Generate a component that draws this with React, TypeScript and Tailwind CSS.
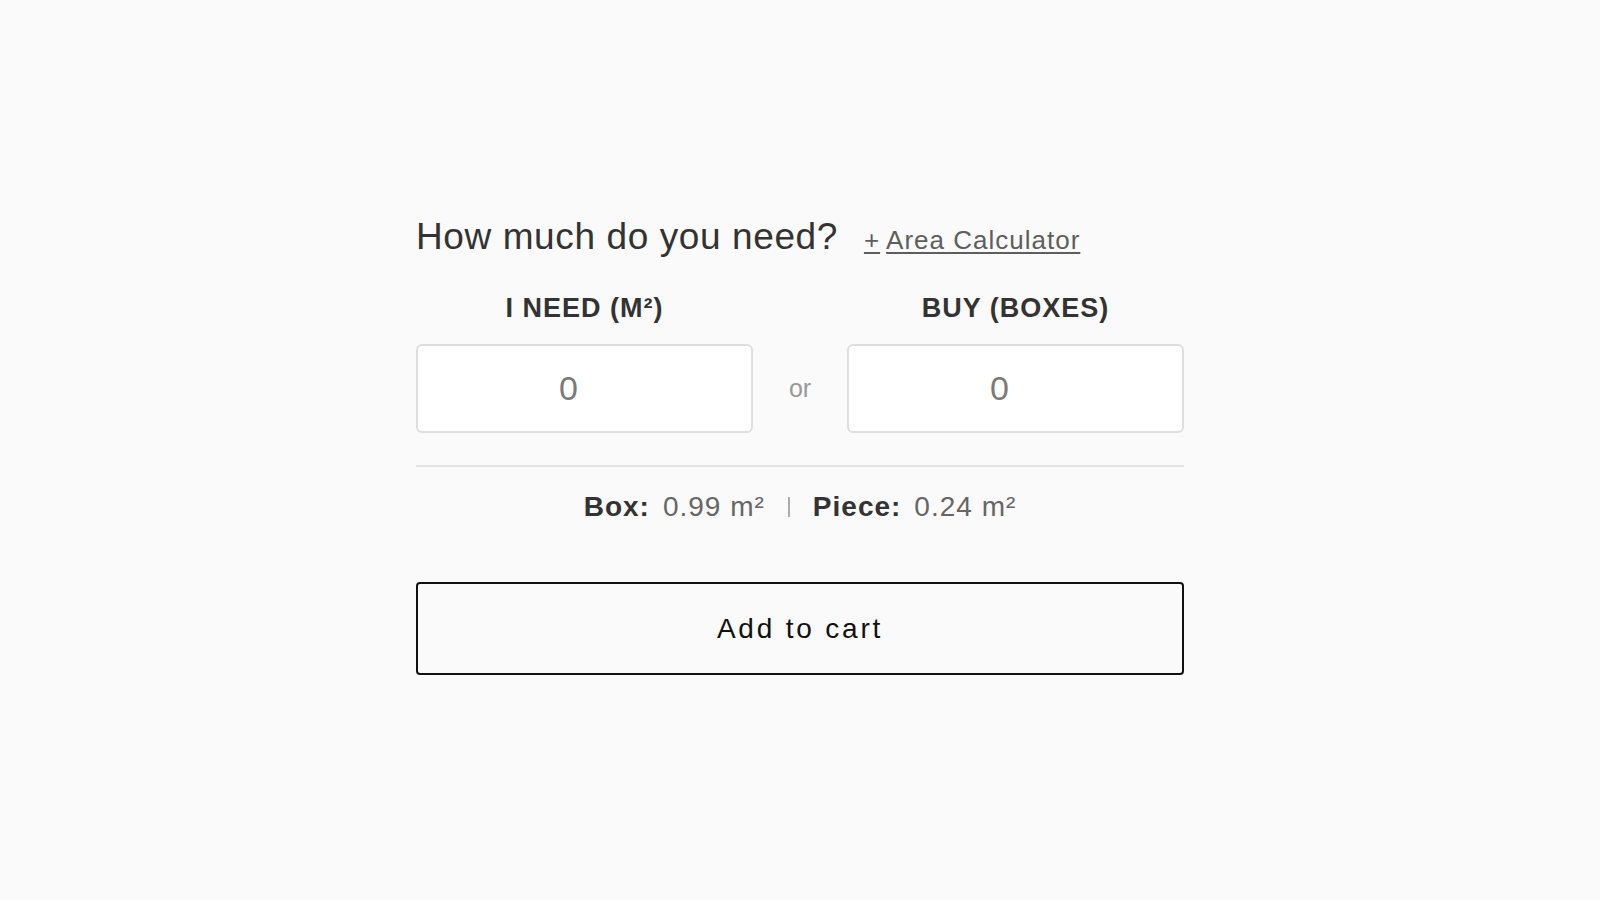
import React from "react";

export default function App() {
  return (
    <div
      className="min-h-screen w-full bg-[#fafafa]"
      style={{ fontFamily: '"Liberation Sans", Arial, Helvetica, sans-serif' }}
    >
      <div className="mx-auto w-[768px] pt-[218px]">
        <div className="flex items-baseline gap-[26px]">
          <h2 className="text-[37px] leading-none tracking-[0.6px] font-normal text-[#333]">
            How much do you need?
          </h2>
          <a
            href="#"
            className="flex items-baseline text-[26px] leading-none tracking-[1px] text-[#5e5e5e]"
          >
            <span className="underline decoration-[1.5px] underline-offset-[3px]">+</span>
            <span className="ml-[6px] underline decoration-[1.5px] underline-offset-[3px]">
              Area Calculator
            </span>
          </a>
        </div>

        <div className="mt-[40px] grid grid-cols-[337px_1fr_337px] gap-y-[22px]">
          <div className="text-center text-[27px] leading-none font-bold tracking-[1px] text-[#333]">
            I NEED (M²)
          </div>
          <div />
          <div className="text-center text-[27px] leading-none font-bold tracking-[1px] text-[#333]">
            BUY (BOXES)
          </div>

          <input
            type="text"
            placeholder="0"
            className="h-[89px] w-full rounded-[6px] border-2 border-[#dedede] bg-white pr-[32px] text-center text-[34px] text-[#777] outline-none placeholder:text-[#7a7a7a]"
          />
          <div className="flex items-center justify-center text-[25px] text-[#999]">or</div>
          <input
            type="text"
            placeholder="0"
            className="h-[89px] w-full rounded-[6px] border-2 border-[#dedede] bg-white pr-[32px] text-center text-[34px] text-[#777] outline-none placeholder:text-[#7a7a7a]"
          />
        </div>

        <div className="mt-[32px] h-[2px] w-full bg-[#e3e3e3]" />

        <div className="mt-[26px] flex items-center justify-center text-[28px] leading-none tracking-[1px]">
          <span className="font-bold text-[#333]">Box:</span>
          <span className="ml-[13px] text-[#666]">0.99 m²</span>
          <span className="mx-[23px] h-[20px] w-[2px] bg-[#ababab]" />
          <span className="font-bold text-[#333]">Piece:</span>
          <span className="ml-[13px] text-[#666]">0.24 m²</span>
        </div>

        <button
          type="button"
          className="mt-[61px] flex h-[93px] w-full items-center justify-center rounded-[4px] border-2 border-[#111] bg-transparent text-[28px] tracking-[2.8px] text-[#111]"
        >
          Add to cart
        </button>
      </div>
    </div>
  );
}
